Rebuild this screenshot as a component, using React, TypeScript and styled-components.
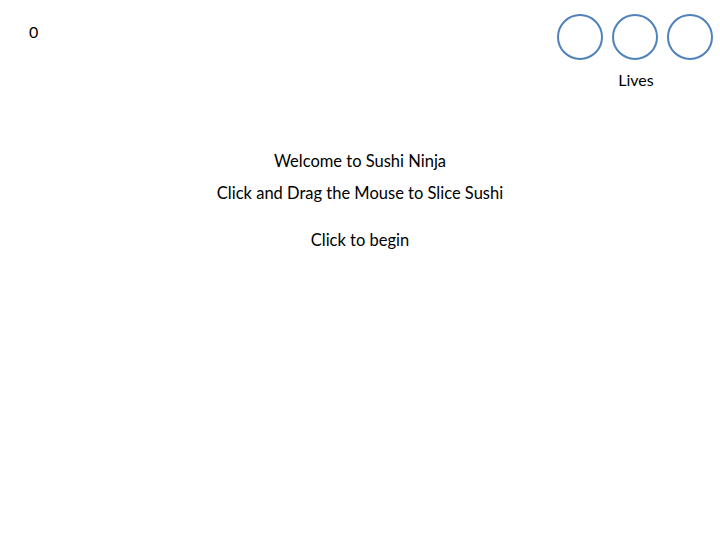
import styled, { createGlobalStyle } from "styled-components"

const GlobalStyle = createGlobalStyle`
    html, body {
        margin: 0;
        padding: 0;
        background: #ffffff;
    }
    body {
        font-family: Lato, "Open Sans", sans-serif;
        color: #000000;
    }
`

export default function App() {
    const lives = [0, 1, 2]
    return (
        <Screen>
            <GlobalStyle />
            <Hud>
                <Score>0</Score>
                <LivesBox>
                    <Circles>
                        {lives.map((i) => (
                            <Life key={i} />
                        ))}
                    </Circles>
                    <LivesLabel>Lives</LivesLabel>
                </LivesBox>
            </Hud>
            <Message>
                <Line>Welcome to Sushi Ninja</Line>
                <Line>Click and Drag the Mouse to Slice Sushi</Line>
                <Start>Click to begin</Start>
            </Message>
        </Screen>
    )
}

const Screen = styled.main`
    width: 720px;
    height: 540px;
    display: flex;
    flex-direction: column;
    overflow: hidden;
`
const Hud = styled.header`
    display: flex;
    justify-content: space-between;
    align-items: flex-start;
    padding: 14px 7px 0 29px;
`
const Score = styled.div`
    font-size: 16px;
    line-height: 20px;
    margin-top: 8px;
`
const LivesBox = styled.aside`
    display: flex;
    flex-direction: column;
    align-items: center;
`
const Circles = styled.div`
    display: flex;
    gap: 9px;
`
const Life = styled.div`
    width: 42px;
    height: 42px;
    border: 2px solid #4f81bd;
    border-radius: 50%;
`
const LivesLabel = styled.div`
    font-size: 16px;
    line-height: 20px;
    margin-top: 10px;
    padding-left: 2px;
`
const Message = styled.section`
    display: flex;
    flex-direction: column;
    align-items: center;
    margin-top: 61px;
    font-size: 16.5px;
`
const Line = styled.p`
    margin: 0 0 12px;
    line-height: 20px;
`
const Start = styled.p`
    margin: 15px 0 0;
    line-height: 20px;
`
